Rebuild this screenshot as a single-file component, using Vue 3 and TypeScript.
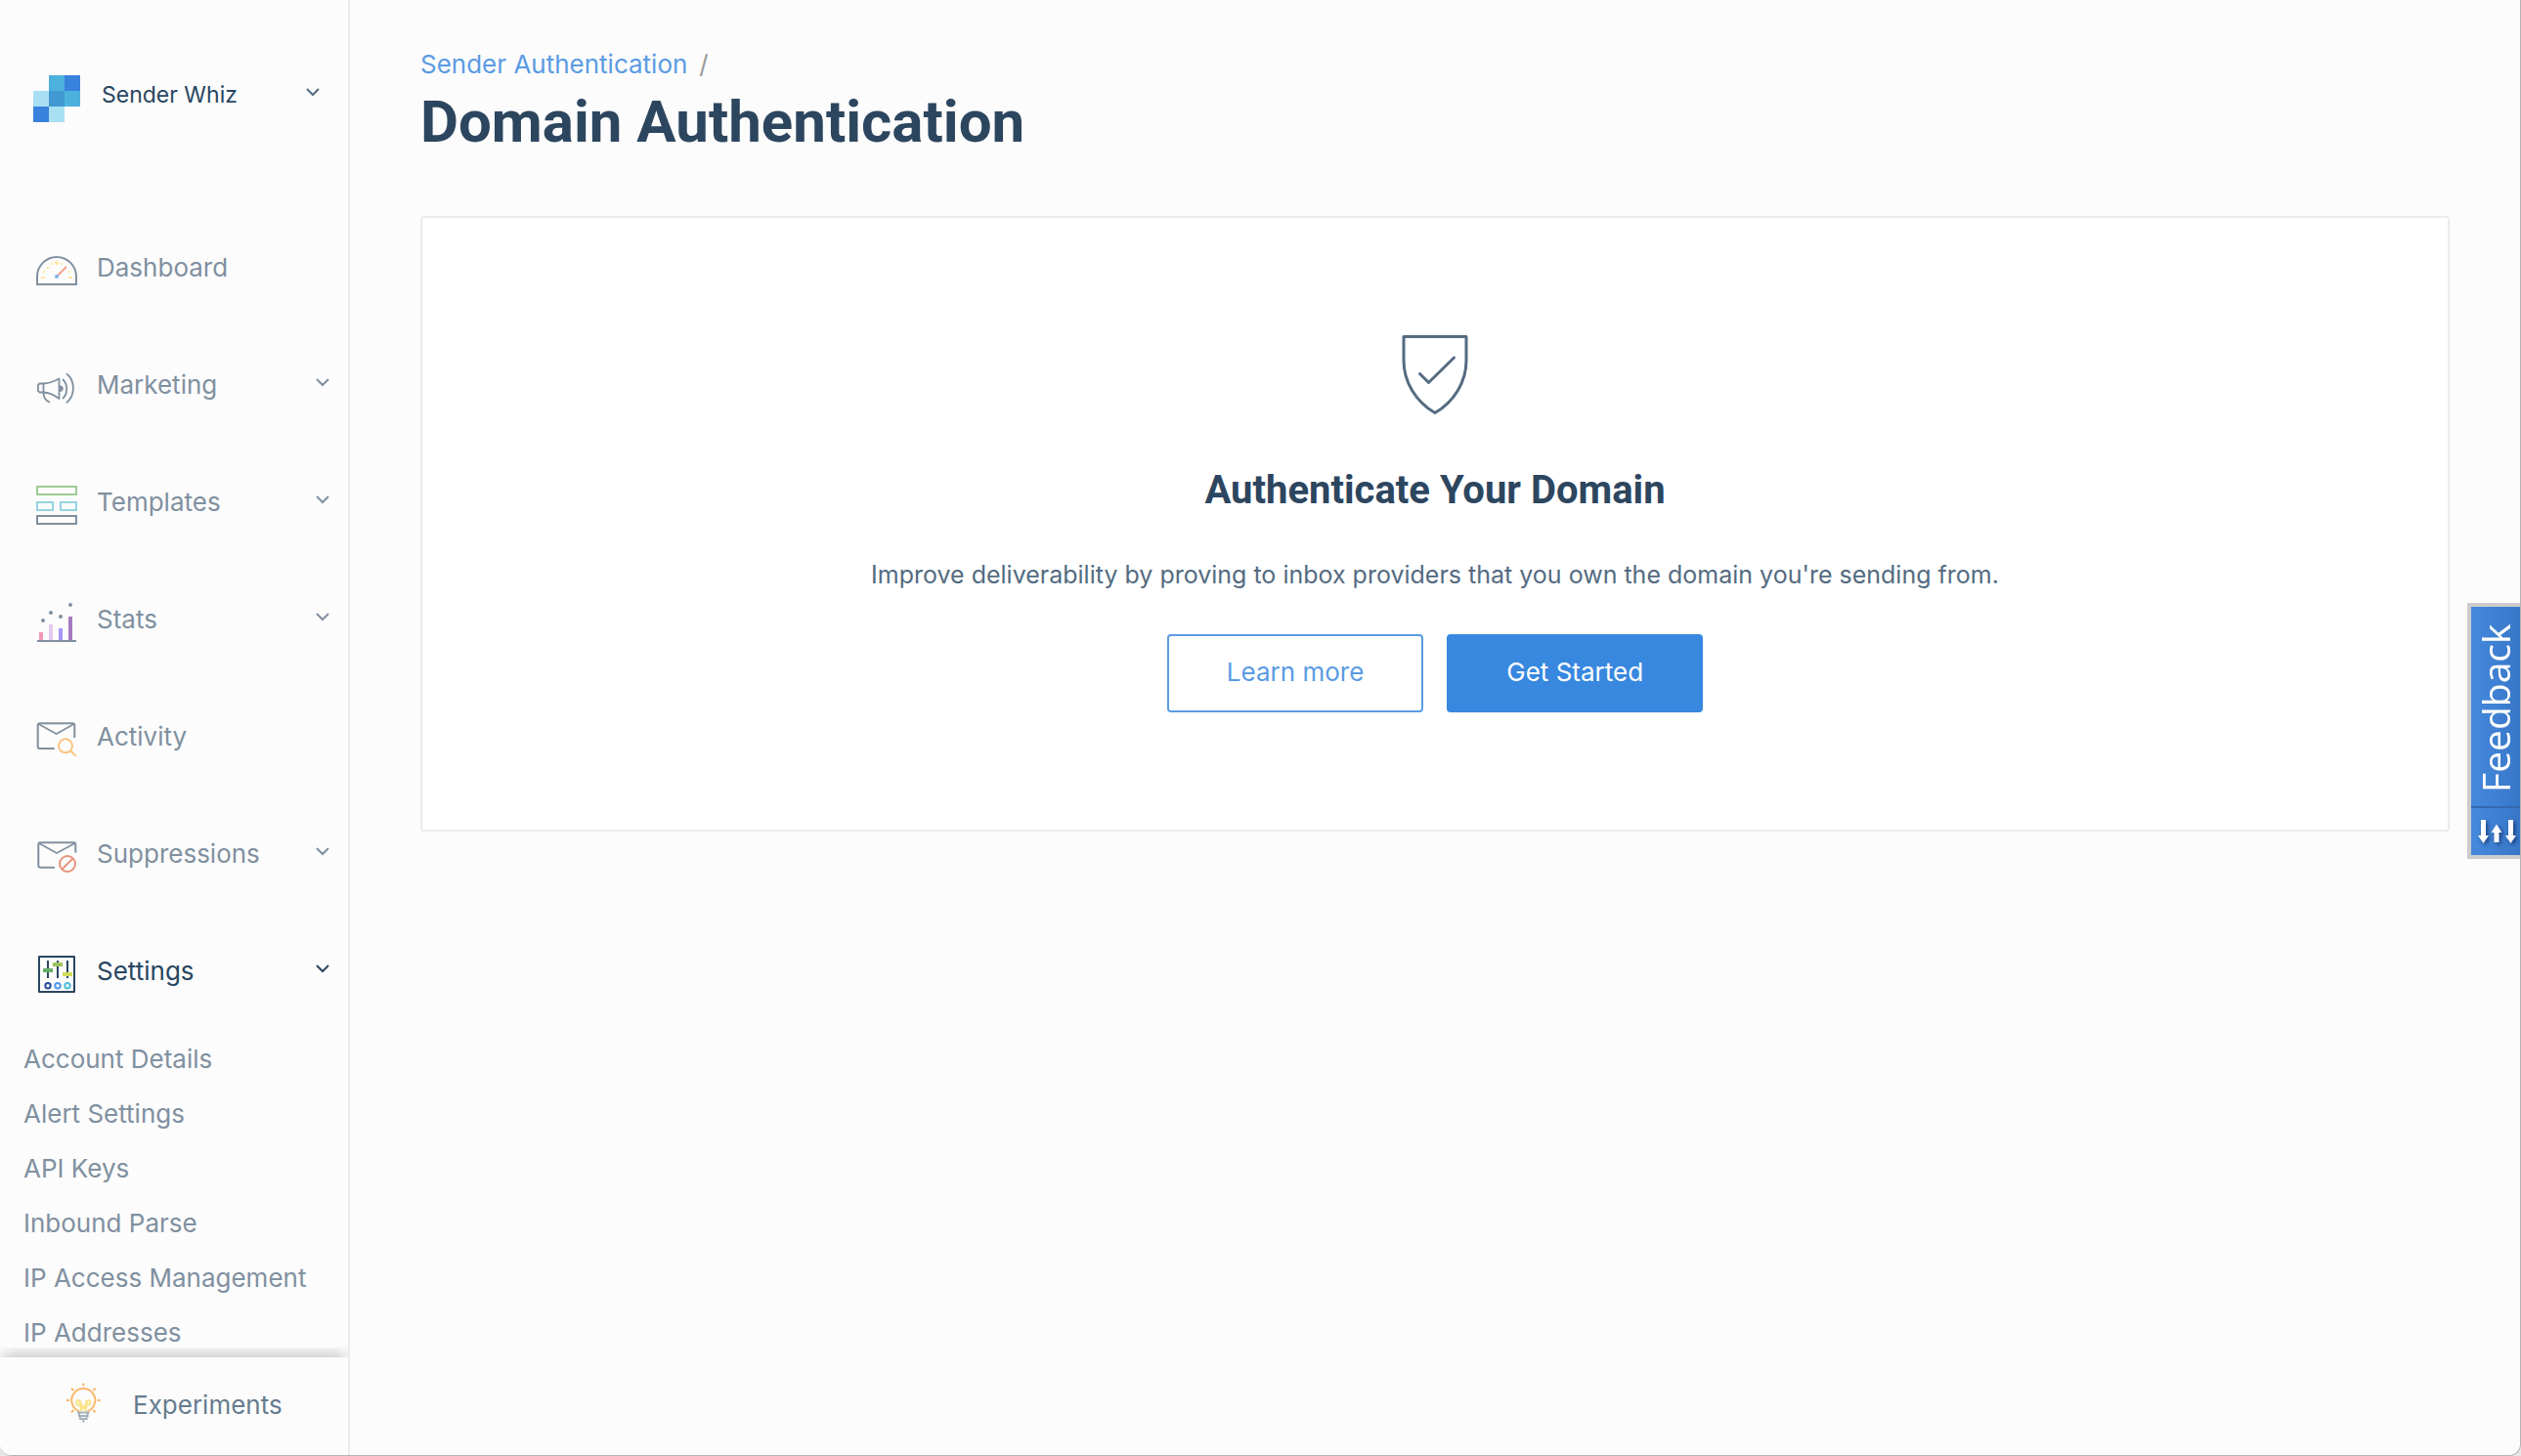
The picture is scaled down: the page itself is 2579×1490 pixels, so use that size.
<script setup lang="ts">
import { ref } from 'vue'

interface NavItem {
  id: string
  label: string
  expandable: boolean
}

const navItems: NavItem[] = [
  { id: 'dashboard', label: 'Dashboard', expandable: false },
  { id: 'marketing', label: 'Marketing', expandable: true },
  { id: 'templates', label: 'Templates', expandable: true },
  { id: 'stats', label: 'Stats', expandable: true },
  { id: 'activity', label: 'Activity', expandable: false },
  { id: 'suppressions', label: 'Suppressions', expandable: true },
  { id: 'settings', label: 'Settings', expandable: true },
]

const settingsLinks: string[] = [
  'Account Details',
  'Alert Settings',
  'API Keys',
  'Inbound Parse',
  'IP Access Management',
  'IP Addresses',
]

const active = ref('settings')
</script>

<template>
  <div class="app">
    <aside class="sidebar">
      <div class="scroll">
        <button type="button" class="account">
          <svg class="icon" viewBox="0 0 48 48" aria-hidden="true">
            <path fill="#4db1de" d="M16 0h16v16H16zM32 16h16v16H32z" />
            <path fill="#3882de" d="M32 0h16v16H32zM0 32h16v16H0z" />
            <path fill="#a9dff3" d="M0 16h16v16H0zM16 32h16v16H16z" />
            <path fill="#4298d2" d="M16 16h16v16H16z" />
          </svg>
          <span class="account-name">Sender Whiz</span>
          <svg class="chevron" viewBox="0 0 16 40" aria-hidden="true"><path d="M2 14l6 6 6-6" /></svg>
        </button>

        <nav class="nav" aria-label="Main">
          <button
            v-for="item in navItems"
            :key="item.id"
            type="button"
            class="nav-item"
            :class="{ active: item.id === active }"
            @click="active = item.id"
          >
            <svg v-if="item.id === 'dashboard'" class="icon line" viewBox="0 0 48 48" aria-hidden="true">
              <path d="M4 41V33a20 20 0 0 1 40 0V41Z" />
              <g fill="#ffe69a" stroke="none">
                <circle cx="24" cy="19" r="2" />
                <path d="M18 19h2v2h-2zM28 19h2v2h-2zM14 23h2v2h-2zM10 27h2v2h-2zM36 27h2v2h-2zM8 33h4v2H8zM36 33h4v2h-4z" />
              </g>
              <path stroke="#f4a28c" d="M25 32l9-9" />
              <circle cx="24" cy="33" r="2" fill="#7fb2ee" stroke="none" />
            </svg>
            <svg v-else-if="item.id === 'marketing'" class="icon line" viewBox="0 0 48 48" aria-hidden="true">
              <g stroke-width="1.8" stroke-linecap="round" stroke-linejoin="round">
                <path d="M10.5 22.5H6.5L5 24v6l1.5 1.5h4z" />
                <path d="M10.5 22.5C16 22.5 21 20.5 26.5 17.5V38C21 34 16 31.5 10.5 31.5" />
                <path d="M10.5 32c0 4.500 2.500 8 6 9.500" />
                <path d="M30.500 18.500c5 5 5 14 0 19M34.500 12.800c8.500 7 8.500 22 0 29" />
              </g>
              <path fill="currentColor" stroke="none" d="M26.500 24.700a3.200 3.200 0 1 1 0 6z" />
            </svg>
            <svg v-else-if="item.id === 'templates'" class="icon line" viewBox="0 0 48 48" aria-hidden="true">
              <path stroke="#9fcb96" d="M4 8h40v8H4z" />
              <path stroke="#94d4e2" d="M4 24h16v8H4zM28 24h16v8H28z" />
              <path d="M4 38h40v8H4z" />
            </svg>
            <svg v-else-if="item.id === 'stats'" class="icon" viewBox="0 0 48 48" aria-hidden="true">
              <path fill="#f596b4" d="M6 37h4v8H6z" />
              <path fill="#e4c9ee" d="M16 29h4v16h-4z" />
              <path fill="#a796f8" d="M26 33h4v12h-4z" />
              <path fill="#a67bc0" d="M36 21h4v24h-4z" />
              <g fill="currentColor">
                <path d="M4 45h40v2H4z" />
                <circle cx="10" cy="25" r="2" />
                <circle cx="18" cy="17" r="2" />
                <circle cx="28" cy="21" r="2" />
                <circle cx="38" cy="9" r="2" />
              </g>
            </svg>
            <svg v-else-if="item.id === 'activity'" class="icon line" viewBox="0 0 48 48" aria-hidden="true">
              <path d="M21.700 36H6.700a2 2 0 0 1-2-2V12.300a2 2 0 0 1 2-2h33.600a2 2 0 0 1 2 2V25" />
              <path stroke-width="1.600" d="M5.500 11l18.200 10L41.500 11" />
              <g stroke="#f9c580">
                <circle cx="33" cy="33.300" r="7" />
                <path d="M38 38.300l5.700 5.400" />
              </g>
            </svg>
            <svg v-else-if="item.id === 'suppressions'" class="icon line" viewBox="0 0 48 48" aria-hidden="true">
              <path d="M22 37.700H7.300a2 2 0 0 1-2-2V14.300a2 2 0 0 1 2-2h34a2 2 0 0 1 2 2v8.200" />
              <path stroke-width="1.600" d="M6 13l18 10 18.500-10" />
              <g stroke="#e8937c">
                <circle cx="35" cy="34" r="8" />
                <path d="M29.500 39.500l11-11" />
              </g>
            </svg>
            <svg v-else class="icon line" viewBox="0 0 48 48" aria-hidden="true">
              <path stroke-linejoin="round" d="M6 9h36v36H6z" />
              <path d="M15 13v18M25 13v18M35 13v18" />
              <g stroke="none">
                <path fill="#68b069" d="M10 21h10v4H10z" />
                <path fill="#9cc45b" d="M20 15h10v4H20z" />
                <path fill="#d0dc5a" d="M30 25h10v4H30z" />
              </g>
              <circle cx="15" cy="38.700" r="2.700" stroke="#294b9c" />
              <circle cx="25" cy="38.700" r="2.700" stroke="#4f97ee" />
              <circle cx="35" cy="38.700" r="2.700" stroke="#4fbdd8" />
            </svg>
            <span class="nav-label">{{ item.label }}</span>
            <svg v-if="item.expandable" class="chevron" viewBox="0 0 16 40" aria-hidden="true"><path d="M2 14l6 6 6-6" /></svg>
          </button>
        </nav>

        <ul class="subnav">
          <li v-for="link in settingsLinks" :key="link"><a href="#">{{ link }}</a></li>
        </ul>
      </div>

      <a href="#" class="experiments">
        <svg class="icon" viewBox="0 0 48 48" fill="none" stroke-width="2" aria-hidden="true">
          <g stroke="#fbb76b">
            <path d="M20.300 30.300a12 12 0 1 1 8 0" />
            <path d="M24.300 1.500v3M7 19h3M38.600 19h3M12 6.700l2.300 2.300M36.600 6.700l-2.300 2.300M12 31.300l2.300-2.300M36.600 31.300l-2.300-2.300" />
          </g>
          <path stroke="#fae58c" stroke-width="2.400" stroke-linejoin="round" d="M22.300 30l-1.600-8.500M26.300 30l1.600-8.500M24.300 27.500l-3-5.500a2.200 2.200 0 1 0-2.600 1.500l2.600-.5M24.300 27.500l3-5.500a2.200 2.200 0 1 1 2.600 1.500l-2.600-.5" />
          <g stroke="#a5b1bd">
            <path d="M18 31.500h12.600" />
            <path d="M20 32v3h8.600v-3M21 35.500v2.500h6.600v-2.500M24.300 38v3.500" />
          </g>
        </svg>
        <span>Experiments</span>
      </a>
    </aside>

    <main class="main">
      <nav class="breadcrumb" aria-label="Breadcrumb">
        <a href="#">Sender Authentication</a>
        <span class="slash">/</span>
      </nav>
      <h1>Domain Authentication</h1>

      <section class="card">
        <svg class="shield" viewBox="0 0 68 82" aria-hidden="true">
          <path d="M2 1.500h64V26c0 22-12.500 42-32 53.500C14.500 68 2 48 2 26Z" />
          <path d="M18.500 39.500l9 9 26-25.500" />
        </svg>
        <h2>Authenticate Your Domain</h2>
        <p>Improve deliverability by proving to inbox providers that you own the domain you're sending from.</p>
        <div class="actions">
          <button type="button" class="btn">Learn more</button>
          <button type="button" class="btn primary">Get Started</button>
        </div>
      </section>
    </main>

    <button type="button" class="feedback">
      <span class="feedback-text">Feedback</span>
      <svg class="arrows" viewBox="0 0 50 48" aria-hidden="true">
        <path d="M10 12h5v16h3l-5.500 8L7 28h3z" />
        <path d="M23.500 35h5V25h3L26 16.500 20.500 25h3z" />
        <path d="M38 12h5v16h3l-5.500 8L35 28h3z" />
      </svg>
    </button>
  </div>
</template>

<style>
body {
  background: #e6e6e6;
}
</style>

<style scoped>
.app {
  display: flex;
  position: relative;
  box-sizing: border-box;
  height: 100vh;
  overflow: hidden;
  border-right: 1px solid #b4b4b4;
  border-bottom: 1px solid #b4b4b4;
  border-radius: 0 0 12px 12px;
  background: #fcfcfc;
  color: #546b81;
  font: 400 26px/40px Inter, "Liberation Sans", sans-serif;
}

button {
  font: inherit;
  color: inherit;
  cursor: pointer;
}

a {
  color: inherit;
  text-decoration: none;
}

.sidebar {
  display: flex;
  flex: none;
  flex-direction: column;
  width: 356px;
  border-right: 2px solid #e9ecef;
}

.scroll {
  flex: 1;
  min-height: 0;
  overflow: hidden;
}

.icon {
  flex: none;
  width: 48px;
  height: 48px;
}

.line {
  fill: none;
  stroke: currentColor;
  stroke-width: 2;
}

.chevron {
  flex: none;
  width: 16px;
  height: 40px;
  margin-left: auto;
  fill: none;
  stroke: currentColor;
  stroke-width: 2;
}

.account {
  display: flex;
  align-items: flex-start;
  width: 100%;
  height: 214px;
  padding: 77px 28px 0 34px;
  border: 0;
  background: none;
  color: #294661;
}

.account .chevron {
  color: #546b81;
}

.account-name {
  margin-left: 22px;
  font-size: 23px;
}

.nav {
  display: flex;
  flex-direction: column;
}

.nav-item {
  display: flex;
  align-items: flex-start;
  height: 120px;
  padding: 40px 18px 0 34px;
  border: 0;
  background: none;
  color: #8090a0;
}

.nav-item .icon {
  margin-top: -4px;
}

.nav-label {
  margin-left: 17px;
}

.nav-item.active {
  color: #294661;
}

.subnav {
  display: flex;
  flex-direction: column;
  gap: 16px;
  margin: 0;
  padding: 10px 24px 0;
  list-style: none;
  color: #8090a0;
}

.subnav a {
  display: block;
}

.experiments {
  display: flex;
  position: relative;
  flex: none;
  align-items: center;
  gap: 27px;
  height: 98px;
  padding: 0 0 2px 61px;
  background: #fcfcfc;
  color: #667c8f;
}

.experiments::before {
  content: "";
  position: absolute;
  right: 0;
  bottom: 100%;
  left: 0;
  height: 10px;
  background: linear-gradient(rgba(0, 0, 0, 0.03), rgba(0, 0, 0, 0.15));
  mask-image: linear-gradient(90deg, rgba(0, 0, 0, 0.4), #000 14px calc(100% - 14px), rgba(0, 0, 0, 0.4));
}

.main {
  flex: 1;
  min-width: 0;
  padding: 46px 72px 0;
}

.breadcrumb {
  display: flex;
  gap: 12px;
}

.breadcrumb a {
  color: #5a9be3;
}

.slash {
  color: #999;
}

h1,
h2 {
  color: #2d465f;
  font-family: Roboto, "Liberation Sans", sans-serif;
  font-weight: 700;
}

h1 {
  margin: 3px 0 60px;
  font-size: 60px;
  line-height: 72px;
}

.card {
  display: flex;
  flex-direction: column;
  align-items: center;
  padding: 120px 40px;
  border: 2px solid #e9ecef;
  border-radius: 4px;
  background: #fff;
  text-align: center;
}

.shield {
  width: 68px;
  height: 82px;
  fill: none;
  stroke: #546b81;
  stroke-width: 3;
  stroke-linejoin: round;
  stroke-linecap: round;
}

h2 {
  margin: 53px 0 42px;
  font-size: 40px;
  line-height: 48px;
}

p {
  margin: 0 0 41px;
  font-size: 25px;
}

.actions {
  display: flex;
  gap: 24px;
}

.btn {
  height: 80px;
  padding: 0 59px 2px;
  border: 2px solid #5a9be3;
  border-radius: 4px;
  background: #fff;
  color: #5a9be3;
}

.btn.primary {
  border-color: #3888df;
  background: #3888df;
  color: #fff;
}

.feedback {
  display: flex;
  position: absolute;
  top: 617px;
  right: 0;
  flex-direction: column;
  box-sizing: border-box;
  width: 54px;
  height: 262px;
  padding: 0;
  border: 4px solid #ccc;
  border-right: 0;
  background: linear-gradient(90deg, #4589dd, #3877c8);
  color: #fff;
}

.feedback-text {
  box-sizing: border-box;
  width: 50px;
  height: 206px;
  padding-top: 14px;
  border-top: 2px solid #3468ad;
  font: 500 39px/50px "Open Sans", sans-serif;
  text-align: left;
  writing-mode: vertical-rl;
  transform: rotate(180deg);
}

.arrows {
  width: 50px;
  height: 48px;
  fill: #fff;
  filter: drop-shadow(2px 2px 2px rgba(0, 20, 70, 0.6));
}
</style>
